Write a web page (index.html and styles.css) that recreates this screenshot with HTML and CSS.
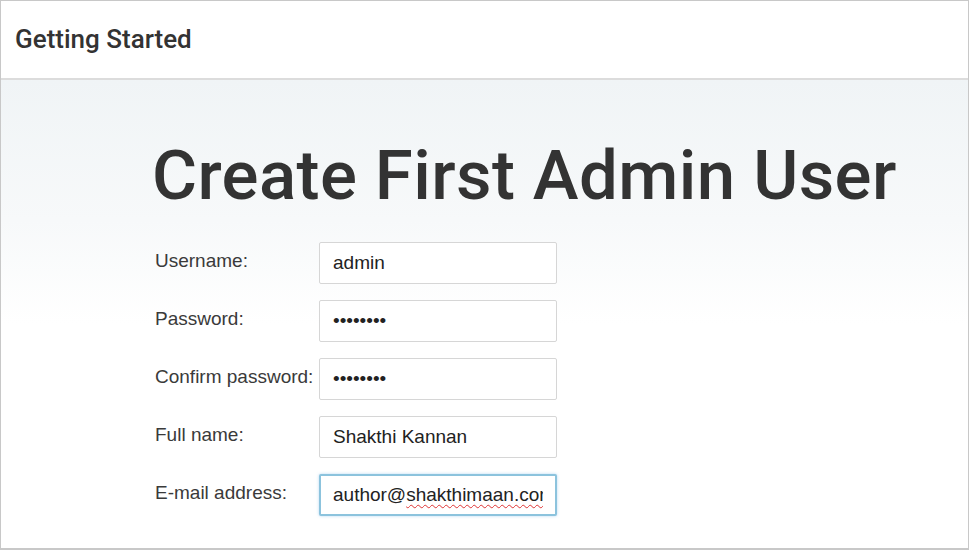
FILE: index.html
```html
<!DOCTYPE html>
<html>
<head>
<meta charset="utf-8">
<link rel="stylesheet" href="styles.css">
</head>
<body>
<div class="frame">
  <header class="top">
    <h1 class="title">Getting Started</h1>
  </header>
  <main class="content">
    <h2 class="heading">Create First Admin User</h2>
    <form class="form">
      <label class="lbl">Username:</label>
      <input class="field" type="text" value="admin">
      <label class="lbl">Password:</label>
      <input class="field" type="password" value="password">
      <label class="lbl">Confirm password:</label>
      <input class="field" type="password" value="password">
      <label class="lbl">Full name:</label>
      <input class="field" type="text" value="Shakthi Kannan">
      <label class="lbl">E-mail address:</label>
      <div class="field focus"><span>author@<span class="spell">shakthimaan.com</span></span></div>
    </form>
  </main>
</div>
</body>
</html>
```
FILE: styles.css
```css
html, body {
  margin: 0;
  padding: 0;
  background: #fff;
}
.frame {
  box-sizing: border-box;
  width: 969px;
  height: 550px;
  border: 1px solid #c8c8c8;
  border-bottom-width: 2px;
  overflow: hidden;
  display: flex;
  flex-direction: column;
}
.top {
  height: 77px;
  border-bottom: 2px solid #dcdcdc;
  display: flex;
  align-items: center;
  padding-left: 14px;
  background: #fff;
}
.title {
  margin: 0;
  font-family: Roboto, sans-serif;
  font-weight: 500;
  font-size: 26px;
  color: #333;
  padding-bottom: 1px;
}
.content {
  flex: 1;
  background: linear-gradient(180deg, #f0f4f6 0%, #f7f9fa 30%, #fff 52%);
  padding-left: 151px;
}
.heading {
  margin: 56px 0 0 0;
  font-family: Roboto, sans-serif;
  font-weight: 500;
  font-size: 69px;
  line-height: 80px;
  color: #333;
  letter-spacing: 0.4px;
}
.form {
  margin-top: 26px;
  margin-left: 3px;
  display: grid;
  grid-template-columns: 164px 238px;
  row-gap: 16px;
  align-items: start;
}
.lbl {
  font-family: "Liberation Sans", Arial, sans-serif;
  font-size: 19px;
  color: #3a3a3a;
  padding-top: 8px;
  white-space: nowrap;
}
.field {
  box-sizing: border-box;
  width: 238px;
  height: 42px;
  border: 1px solid #d6d6d6;
  border-radius: 2px;
  background: #fff;
  padding: 0 13px;
  font-family: "Liberation Sans", Arial, sans-serif;
  font-size: 19px;
  color: #222;
  outline: none;
  margin: 0;
}
.focus {
  display: flex;
  align-items: center;
  white-space: nowrap;
  overflow: hidden;
  border: 2px solid #8cc3dd;
  box-shadow: 0 0 3px rgba(102, 175, 233, 0.5);
  padding: 0 12px;
}
.focus > span {
  display: block;
  overflow: hidden;
  width: 212px;
  padding-bottom: 5px;
  margin-bottom: -5px;
}
.spell {
  text-decoration: underline wavy #d33;
  text-decoration-thickness: 1px;
  text-underline-offset: 3px;
}
```
